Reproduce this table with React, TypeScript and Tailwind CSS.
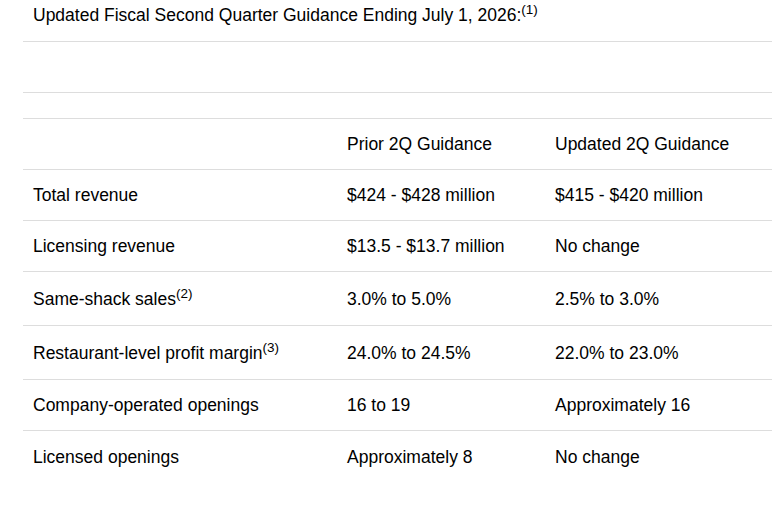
const rows = [
  { label: "Total revenue", prior: "$424 - $428 million", updated: "$415 - $420 million" },
  { label: "Licensing revenue", prior: "$13.5 - $13.7 million", updated: "No change" },
  { label: "Same-shack sales", note: "(2)", prior: "3.0% to 5.0%", updated: "2.5% to 3.0%" },
  { label: "Restaurant-level profit margin", note: "(3)", prior: "24.0% to 24.5%", updated: "22.0% to 23.0%" },
  { label: "Company-operated openings", prior: "16 to 19", updated: "Approximately 16" },
  { label: "Licensed openings", prior: "Approximately 8", updated: "No change", last: true },
]

const App = () => {
  return (
    <div className="w-[772px] h-[506px] overflow-hidden bg-white text-black text-[17.5px] leading-[20px] font-['Liberation_Sans',Arial,sans-serif]">
      <div className="ml-[23px]">
        {/* title */}
        <div className="h-[42px] border-b border-[#dddddd] px-[10px] pt-[5px]">
          Updated Fiscal Second Quarter Guidance Ending July 1, 2026:
          <sup className="relative top-[-7px] text-[13.5px]">(1)</sup>
        </div>
        <div className="h-[51px] border-b border-[#dddddd]" />
        <div className="h-[26px] border-b border-[#dddddd]" />

        {/* header */}
        <div className="flex items-center h-[51px] border-b border-[#dddddd]">
          <div className="w-[314px] px-[10px]" />
          <div className="w-[208px] px-[10px]">Prior 2Q Guidance</div>
          <div className="flex-1 px-[10px]">Updated 2Q Guidance</div>
        </div>

        {rows.map((row) => (
          <div
            key={row.label}
            className={`flex items-center ${row.note ? "h-[54px]" : "h-[51px]"} ${row.last ? "" : "border-b border-[#dddddd]"}`}
          >
            <div className="w-[314px] px-[10px] whitespace-nowrap">
              {row.label}
              {row.note && <sup className="relative top-[-7px] text-[13.5px]">{row.note}</sup>}
            </div>
            <div className="w-[208px] px-[10px] whitespace-nowrap">{row.prior}</div>
            <div className="flex-1 px-[10px] whitespace-nowrap">{row.updated}</div>
          </div>
        ))}
      </div>
    </div>
  )
}

export default App
